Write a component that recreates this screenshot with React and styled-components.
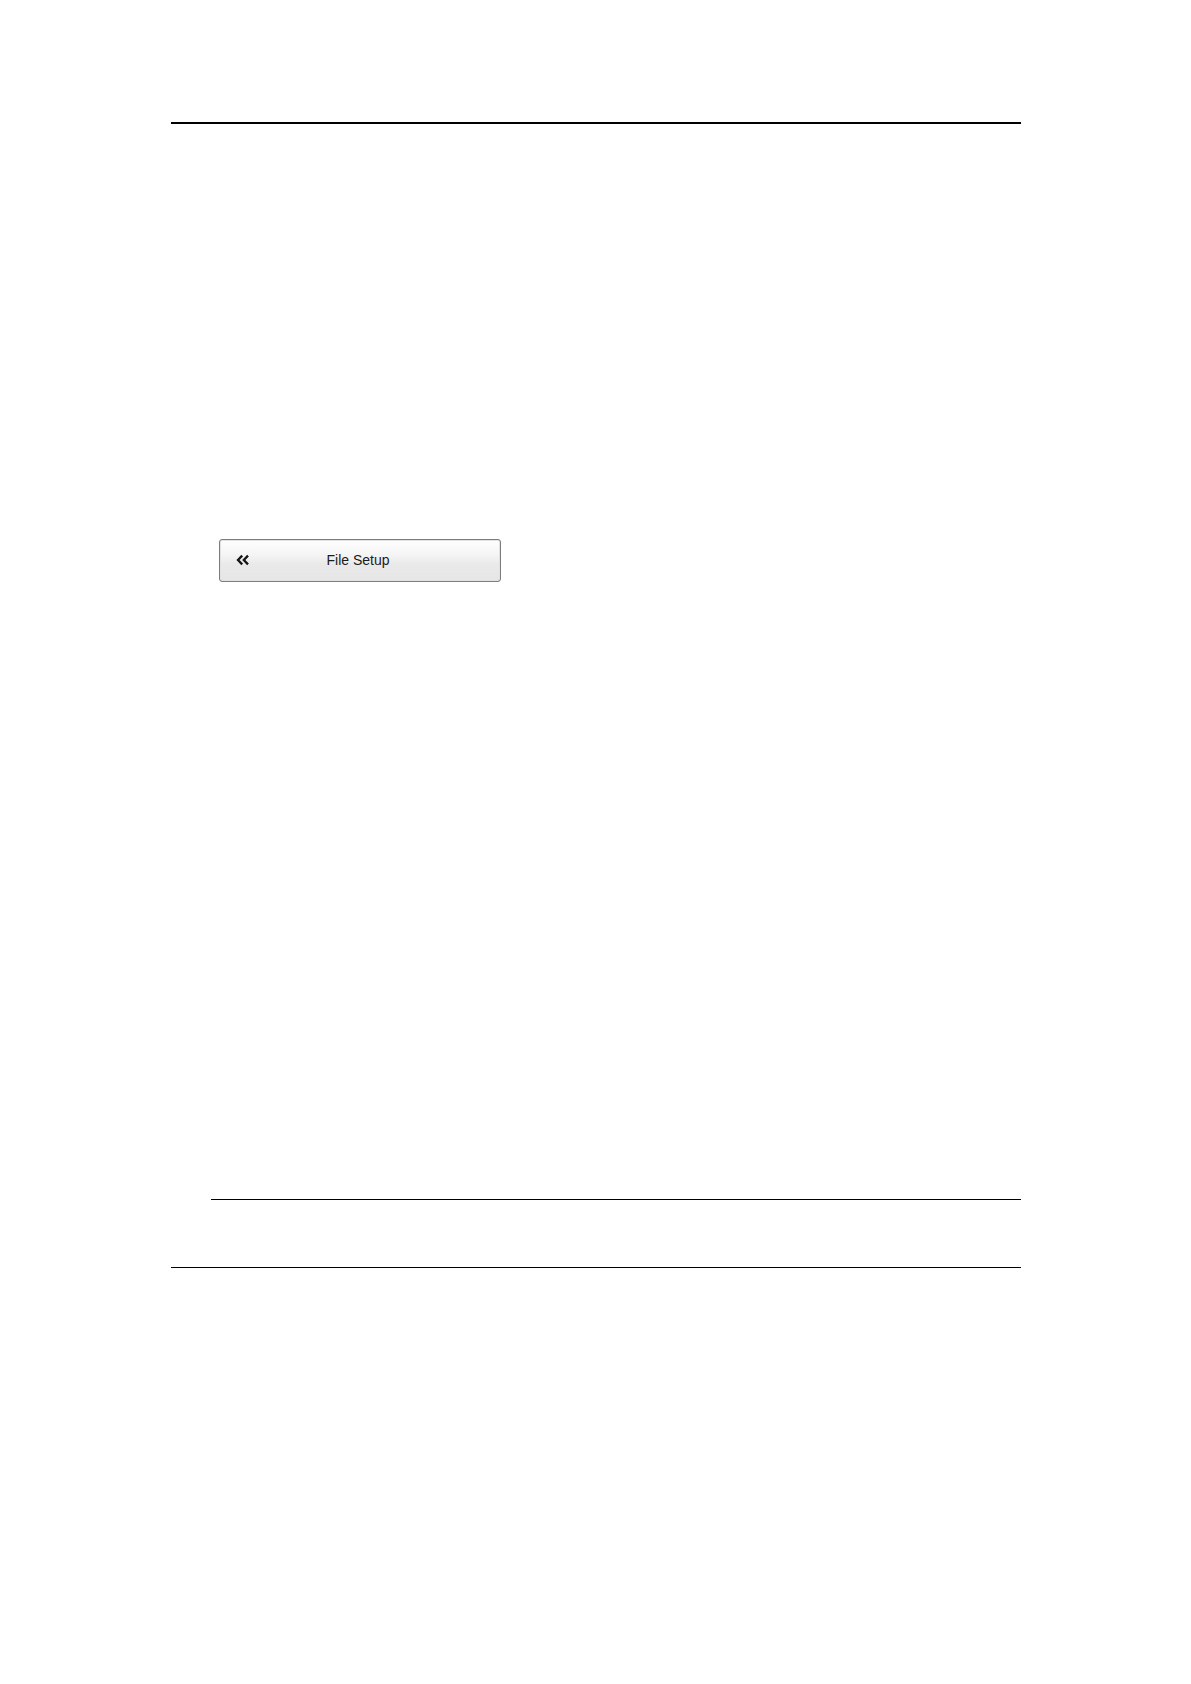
import React from "react";
import styled, { createGlobalStyle } from "styled-components";

const GlobalStyle = createGlobalStyle`
  *, *::before, *::after { box-sizing: border-box; }
  body {
    margin: 0;
    background: #fff;
    font-family: "Liberation Sans", Arial, sans-serif;
  }
`;

const Page = styled.main`
  display: flex;
  flex-direction: column;
  min-height: 100vh;
  padding: 122px 170px 0 171px;
`;

const Rule = styled.hr`
  align-self: stretch;
  height: ${(p) => p.$weight}px;
  margin: 0 0 0 ${(p) => p.$indent || 0}px;
  border: 0;
  background: #000;
`;

const Section = styled.section`
  padding: 415px 0 617px 48px;
`;

const Footnote = styled.footer`
  display: flex;
  flex-direction: column;
  gap: 67px;
`;

const MenuButton = styled.button`
  display: grid;
  grid-template-columns: 12px 1fr 16px;
  align-items: center;
  width: 282px;
  max-width: 100%;
  height: 43px;
  padding: 0 16px 2px;
  border: 1px solid #7c7c7c;
  border-radius: 3px;
  background: linear-gradient(#fefefe 0%, #f5f5f5 35%, #e9e9e9 60%, #e6e6e6 100%);
  box-shadow: inset 0 0 0 1px #e2e2e2, inset 0 -1px 0 #b4b4b4;
  color: #1c1c1c;
  font: 14px/20px "Liberation Sans", Arial, sans-serif;
  text-align: center;
`;

const BackIcon = styled.svg`
  display: block;
  width: 13px;
  height: 12px;
  fill: none;
  stroke: #151515;
  stroke-width: 2.3;
`;

export default function App() {
  return (
    <>
      <GlobalStyle />
      <Page>
        <Rule $weight={2} />
        <Section>
          <MenuButton type="button">
            <BackIcon viewBox="0 0 13 12" aria-hidden="true">
              <path d="M6.2 1.6 L2 6 L6.2 10.4 M12 1.6 L7.8 6 L12 10.4" />
            </BackIcon>
            <span>File Setup</span>
          </MenuButton>
        </Section>
        <Footnote>
          <Rule $weight={1} $indent={40} />
          <Rule $weight={1} />
        </Footnote>
      </Page>
    </>
  );
}
